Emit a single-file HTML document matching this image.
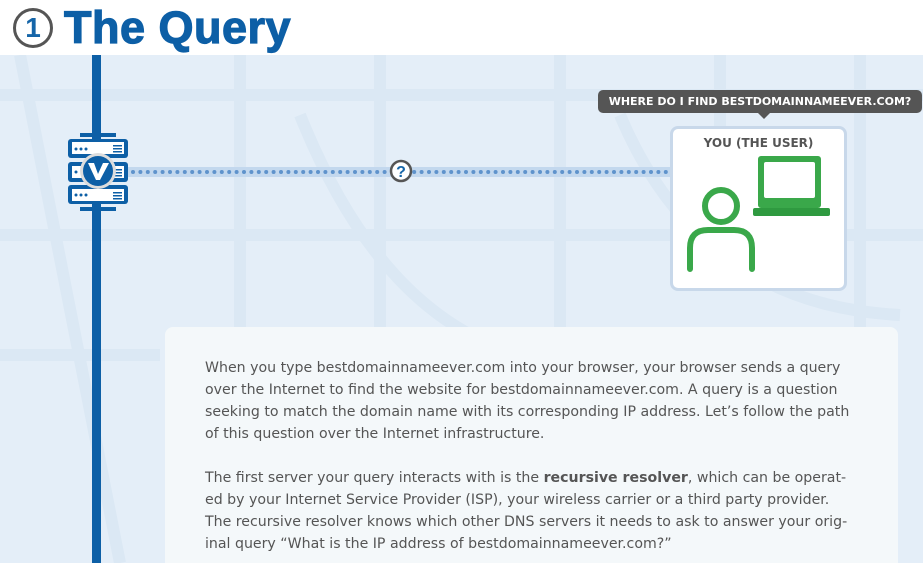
<!DOCTYPE html>
<html><head><meta charset="utf-8"><style>
*{margin:0;padding:0;box-sizing:border-box}
html,body{width:923px;height:563px;overflow:hidden}
body{background:#fff;position:relative;font-family:"DejaVu Sans","Liberation Sans",sans-serif}
.hdr{position:absolute;left:0;top:0;width:923px;height:55px;background:#fff}
.num{position:absolute;left:13px;top:8px;width:40px;height:40px;border:3px solid #555;border-radius:50%;color:#1565a8;font:bold 28px "Liberation Sans",sans-serif;text-align:center;line-height:34px}
.title{position:absolute;left:64px;top:0px;color:#0d5fa6;font:bold 45px "Liberation Sans",sans-serif;line-height:55px;letter-spacing:0.5px;-webkit-text-stroke:1.2px #0d5fa6}
.bg{position:absolute;left:0;top:55px;width:923px;height:508px;background:#e4eef8;overflow:hidden}
.vline{position:absolute;left:92px;top:55px;width:9px;height:508px;background:#0d5fa6}
.card{position:absolute;left:165px;top:327px;width:733px;height:260px;background:#f4f8fa;border-radius:8px}
.txt{position:absolute;left:205px;top:357px;color:#555;font-size:14.15px;line-height:22px;white-space:nowrap}
.bubble{position:absolute;left:598px;top:90px;width:324px;height:23px;background:#555;border-radius:5px;color:#fff;font-weight:bold;font-size:11px;text-align:center;line-height:23px}
.bubble:after{content:"";position:absolute;left:160px;top:23px;border:6px solid transparent;border-top-color:#555}
.user{position:absolute;left:670px;top:126px;width:177px;height:165px;background:#fff;border:3px solid #c8d8ea;border-radius:8px}
.ut{position:absolute;top:7px;width:100%;text-align:center;color:#555;font-weight:bold;font-size:12px}
</style></head><body>
<div class="hdr"><div class="num">1</div><div class="title">The Query</div></div>
<div class="bg">
<svg width="923" height="508" style="position:absolute;left:0;top:0" fill="none" stroke="#dbe8f4" stroke-width="12">
<path d="M0 40H923M0 180H923M0 300H160M240 0V508M380 0V300M560 0V300M720 0V80M860 0V508M20 0L120 508M300 60Q380 260 520 300M620 60Q700 250 900 260"/>
</svg>
</div>
<div class="vline"></div>
<svg style="position:absolute;left:0;top:0" width="923" height="563">
<rect x="125" y="167" width="545" height="10" fill="#c3d8ee"/>
<line x1="133" y1="172" x2="668" y2="172" stroke="#5f93cc" stroke-width="4" stroke-linecap="round" stroke-dasharray="0 7.4"/>
<circle cx="401" cy="171" r="10" fill="#fff" stroke="#555" stroke-width="2.5"/>
<text x="401" y="177" text-anchor="middle" font-family="Liberation Sans" font-weight="bold" font-size="16" fill="#1565a8">?</text>
<rect x="80" y="133" width="36" height="4" fill="#0d5fa6"/>
<rect x="80" y="207" width="36" height="4" fill="#0d5fa6"/>
<rect x="68" y="139" width="60" height="19" rx="3" fill="#0d5fa6"/>
<rect x="68" y="162" width="60" height="20" rx="3" fill="#0d5fa6"/>
<rect x="68" y="185" width="60" height="19" rx="3" fill="#0d5fa6"/>
<rect x="72" y="142" width="52" height="12" fill="#fff"/>
<rect x="72" y="166" width="52" height="12" fill="#fff"/>
<rect x="72" y="189" width="52" height="12" fill="#fff"/>
<g fill="#0d5fa6"><circle cx="76" cy="149" r="1.5"/><circle cx="81" cy="149" r="1.5"/><circle cx="86" cy="149" r="1.5"/><circle cx="76" cy="195" r="1.5"/><circle cx="81" cy="195" r="1.5"/><circle cx="86" cy="195" r="1.5"/><circle cx="76" cy="172" r="1.5"/>
<rect x="113" y="145" width="9" height="1.5"/><rect x="113" y="148" width="9" height="1.5"/><rect x="113" y="151" width="9" height="1.5"/><rect x="113" y="192" width="9" height="1.5"/><rect x="113" y="195" width="9" height="1.5"/><rect x="113" y="198" width="9" height="1.5"/><rect x="113" y="169" width="9" height="1.5"/><rect x="113" y="172" width="9" height="1.5"/><rect x="113" y="175" width="9" height="1.5"/></g>
<circle cx="98" cy="171" r="18" fill="#ddd"/>
<circle cx="98" cy="171" r="15" fill="#0d5fa6"/>
<path d="M88 163L96 180H100L109 163H103L98 174L94 163Z" fill="#fff"/>
</svg>
<div class="bubble">WHERE DO I FIND BESTDOMAINNAMEEVER.COM?</div>
<div class="user"><div class="ut">YOU (THE USER)</div>
<svg width="177" height="165" style="position:absolute;left:-3px;top:-3px" fill="none">
<rect x="88" y="30" width="63" height="52" rx="3" fill="#3aa84a"/>
<rect x="94" y="36" width="51" height="36" rx="2" fill="#fff"/>
<rect x="83" y="82" width="77" height="8" rx="2" fill="#2f9a40"/>
<g stroke="#3aa84a" stroke-width="6" stroke-linecap="round">
<circle cx="51" cy="80" r="16"/>
<path d="M20 143V122Q20 104 38 104H64Q82 104 82 122V143"/>
</g>
</svg></div>
<div class="card"></div>
<div class="txt">When you type bestdomainnameever.com into your browser, your browser sends a query<br>over the Internet to find the website for bestdomainnameever.com. A query is a question<br>seeking to match the domain name with its corresponding IP address. Let’s follow the path<br>of this question over the Internet infrastructure.<br><br>The first server your query interacts with is the <b>recursive resolver</b>, which can be operat-<br>ed by your Internet Service Provider (ISP), your wireless carrier or a third party provider.<br>The recursive resolver knows which other DNS servers it needs to ask to answer your orig-<br>inal query “What is the IP address of bestdomainnameever.com?”</div>
</body></html>
